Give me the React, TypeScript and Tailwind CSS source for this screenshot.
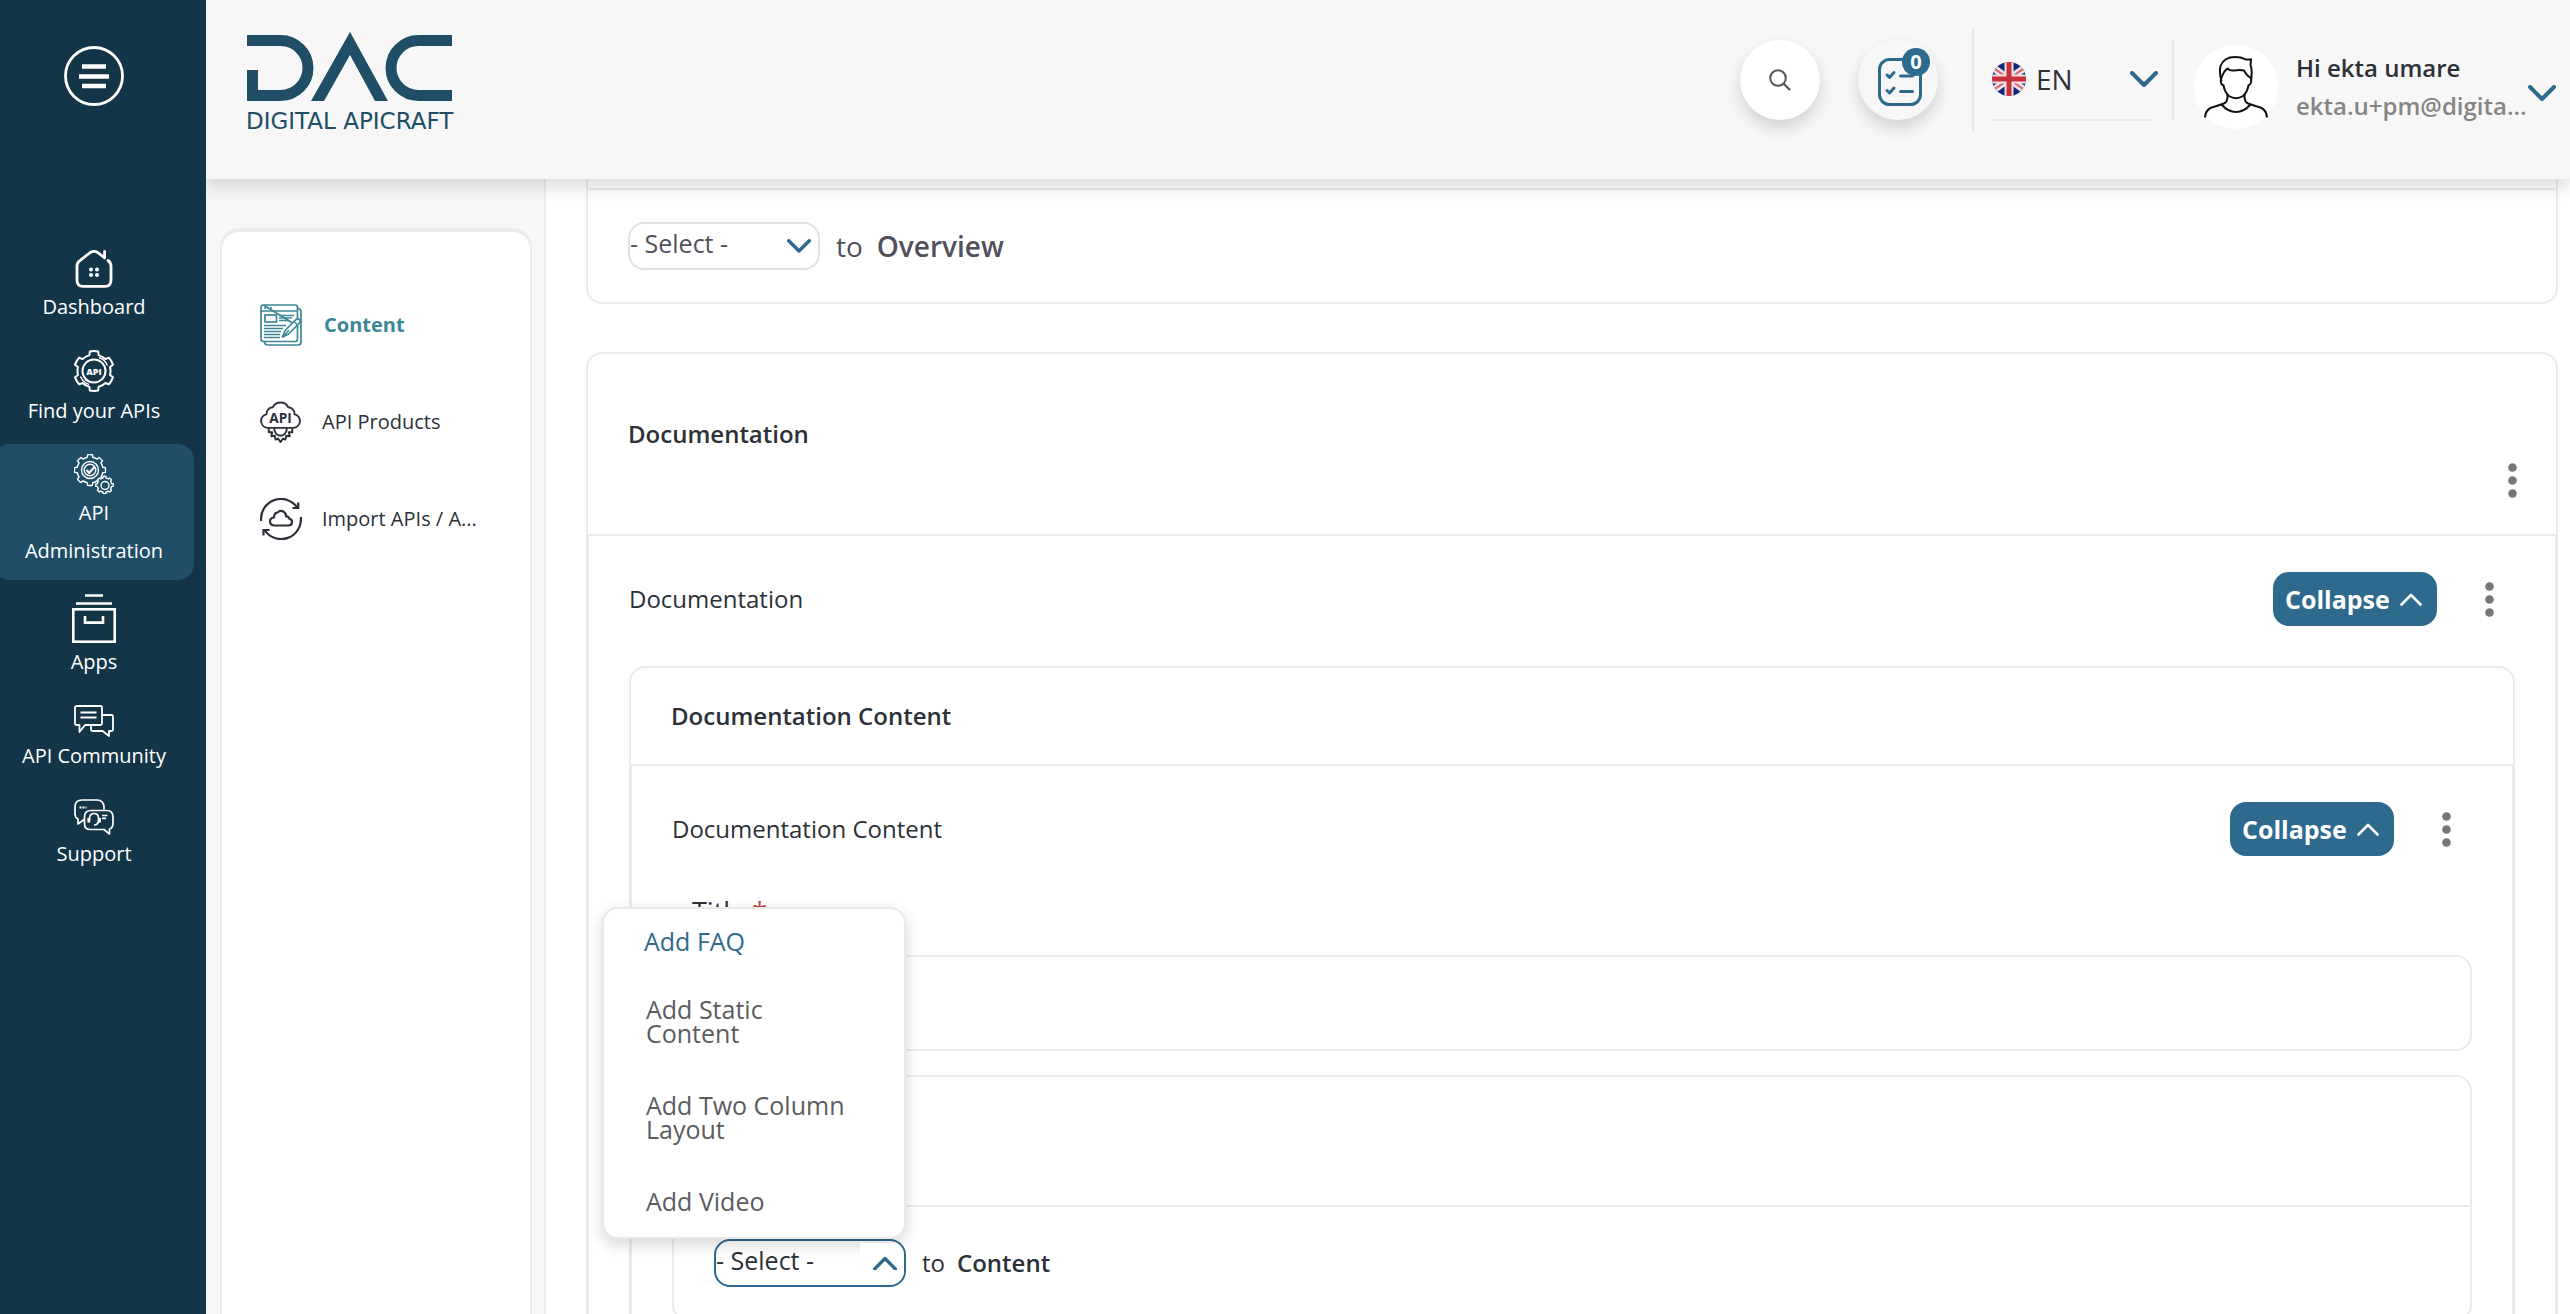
import { ReactNode } from 'react';
import clsx from 'clsx';

function gearPath(cx: number, cy: number, outer: number, inner: number, teeth: number) {
  const step = (Math.PI * 2) / teeth;
  const at = (r: number, t: number) =>
    `${(cx + r * Math.cos(t)).toFixed(2)} ${(cy + r * Math.sin(t)).toFixed(2)}`;
  let d = '';
  for (let i = 0; i < teeth; i++) {
    const a = i * step - Math.PI / 2;
    d += i === 0 ? `M${at(inner, a - step * 0.27)}` : `A${inner} ${inner} 0 0 1 ${at(inner, a - step * 0.27)}`;
    d += `L${at(outer, a - step * 0.2)}A${outer} ${outer} 0 0 1 ${at(outer, a + step * 0.2)}`;
    d += `L${at(inner, a + step * 0.27)}`;
  }
  return `${d}A${inner} ${inner} 0 0 1 ${at(inner, -Math.PI / 2 - step * 0.27)}Z`;
}

function Chevron({ up, className }: { up?: boolean; className?: string }) {
  return (
    <svg viewBox="0 0 28 17" fill="none" stroke="currentColor" strokeWidth="4" className={className} aria-hidden="true">
      <path d={up ? 'M2 15L14 3L26 15' : 'M2 2L14 14L26 2'} strokeLinecap="round" strokeLinejoin="round" />
    </svg>
  );
}

function Logo() {
  return (
    <a href="#" className="block pt-1 text-[#214e67]">
      <svg width="207" height="70" viewBox="246 32 207 70" fill="none" aria-label="DAC">
        <path
          d="M247 40.5H280.5A27.5 27.5 0 0 1 280.5 95.5H252.5V70"
          stroke="currentColor"
          strokeWidth="11"
        />
        <path d="M350 32L388 101H375L350 55L324 101H311Z" fill="currentColor" />
        <path d="M452 40.5H418.5A27.5 27.5 0 0 0 418.5 95.5H452" stroke="currentColor" strokeWidth="11" />
      </svg>
      <span className="mt-2 block whitespace-nowrap font-['DejaVu_Sans',sans-serif] text-[23px] leading-[22px]">
        DIGITAL APICRAFT
      </span>
    </a>
  );
}

function HomeIcon() {
  return (
    <svg width="38" height="38" viewBox="0 0 38 38" fill="none" stroke="currentColor" strokeWidth="2.8">
      <path
        d="M33 10.5q3 2 3 5.500V30q0 6.400-6 6.400H8q-6 0-6-6.400V16q0-3.200 2.600-5.200L14.600 3q4.400-3.200 8.800 0L29.600 7.800V1.500"
        strokeLinecap="round"
        strokeLinejoin="round"
      />
      <g fill="currentColor" stroke="none">
        <circle cx="16" cy="19.500" r="2" />
        <circle cx="22" cy="19.500" r="2" />
        <circle cx="16" cy="25" r="2" />
        <circle cx="22" cy="25" r="2" />
      </g>
    </svg>
  );
}

function FindIcon() {
  return (
    <svg width="42" height="42" viewBox="0 0 42 42" fill="none" stroke="currentColor" strokeWidth="2">
      <path d={gearPath(21, 21, 20, 16.5, 6)} strokeLinejoin="round" />
      <circle cx="21" cy="21" r="11.500" />
      <path d="M26 7.500q6 2 8.500 8M16 34.500q-6-2-8.500-8M12 29.500l6 3" strokeWidth="1.400" />
      <text
        x="21"
        y="24.500"
        textAnchor="middle"
        fill="currentColor"
        stroke="none"
        fontFamily="Open Sans, sans-serif"
        fontWeight="800"
        fontSize="9"
      >
        API
      </text>
    </svg>
  );
}

function AdminIcon() {
  return (
    <svg width="40" height="40" viewBox="0 0 40 40" fill="none" stroke="currentColor" strokeWidth="1.4">
      <path d={gearPath(16, 16, 15.5, 13, 8)} strokeLinejoin="round" />
      <circle cx="16" cy="16" r="8.500" />
      <circle cx="16" cy="16" r="5.800" />
      <path d="M12.500 16l2.700 2.800L20.500 13" strokeWidth="2.200" />
      <path d={gearPath(30.5, 31, 8.7, 7.2, 8)} fill="#214e67" strokeLinejoin="round" />
      <circle cx="31" cy="31.500" r="4" />
    </svg>
  );
}

function AppsIcon() {
  return (
    <svg width="44" height="49" viewBox="0 0 44 49" fill="none" stroke="currentColor" strokeWidth="2.6">
      <path d="M13 1.500H31M4 9.500H40M13 22V28.600H31V22" />
      <rect x="1.300" y="15.300" width="41.400" height="32.400" />
    </svg>
  );
}

function CommunityIcon() {
  return (
    <svg width="40" height="32" viewBox="0 0 40 32" fill="none" stroke="currentColor" strokeWidth="1.800">
      <path d="M3 1H26.500Q28 1 28 2.500V18.500Q28 20 26.500 20H11L5.500 27V20H2.500Q1 20 1 18.500V2.500Q1 1 3 1Z" strokeLinejoin="round" />
      <path d="M6.500 7.500H22.500M6.500 12.500H22.500" />
      <path d="M28 10H37.500Q39 10 39 11.500V24.500Q39 26 37.500 26H35V31L28.500 26H18.500Q17 26 17 24.500V20" strokeLinejoin="round" />
    </svg>
  );
}

function SupportIcon() {
  return (
    <svg width="40" height="36" viewBox="0 0 40 36" fill="none" stroke="currentColor" strokeWidth="1.700" strokeLinejoin="round">
      <path d="M30 10.500V8Q29.500 1 23 1H8Q1 1 1 8V15Q1 18.500 4 20V25L10 20.500" />
      <path d="M17 11.500H32.500Q39 11.500 39 18V24Q39 29 35.500 30V35L30 30.500H16Q10.500 30.500 10.500 25V18Q10.500 11.500 17 11.500Z" />
      <path d="M5.500 8.500H12.500" strokeDasharray="2 1" strokeWidth="2" />
      <path d="M15.500 21V19Q16 14.500 20 14.500Q24.500 14.500 24.500 19V21Q24.500 26 20 26" />
      <path d="M14.800 19V23.500M25.500 19V23.500" strokeWidth="2.800" />
      <path d="M28 16.500H33.500M28 19.300H32" />
    </svg>
  );
}

function ContentIcon() {
  return (
    <svg width="42" height="42" viewBox="0 0 42 42" fill="none" stroke="currentColor" strokeWidth="1.700">
      <path d="M3.500 1H35Q37.500 1 37.500 3.500V15M37.500 22V35Q37.500 37.500 35 37.500H3.500Q1 37.500 1 35V3.500Q1 1 3.500 1Z" />
      <path d="M37.500 4.500Q41 4.500 41 8V38Q41 41 38 41H8Q4.500 41 4.500 37.500" />
      <path d="M1 7H37.500" />
      <path d="M4 4H12" strokeDasharray="2 1" />
      <rect x="5" y="11" width="11.500" height="7" />
      <path d="M19 11.500H34M19 14H32M19 16.500H29M4 21.500H26M4 24.500H23M4 27.500H21M4 30.500H20M4 33.500H20" strokeWidth="1.500" />
      <path d="M22.500 33L25 26.500L36 15.500Q38 14 39.800 15.800Q41 17.500 39.500 19L28.500 30Z" fill="white" strokeLinejoin="round" />
      <path d="M22.500 33L29 26M34 17.500L37.500 21" strokeWidth="1.300" />
    </svg>
  );
}

function ProductsIcon() {
  return (
    <svg width="42" height="42" viewBox="0 0 42 43" fill="none" stroke="currentColor" strokeWidth="2">
      <path
        d="M7.500 27.500A7 7 0 0 1 6 13.700A7 7 0 0 1 12.500 6.500A9 9 0 0 1 28.500 6.500A7 7 0 0 1 35 13.700A7 7 0 0 1 33.500 27.500Z"
        strokeLinejoin="round"
      />
      <path d="M8.500 28V32H12L11 36L14.500 35.500L15.500 39.500L18 38.500L20.500 42L23 38.500L25.500 39.500L26.500 35.500L30 36L29 32H32.500V28" strokeLinejoin="round" />
      <path d="M14 28A6.500 7.500 0 0 0 27 28" />
      <text
        x="20.500"
        y="22.500"
        textAnchor="middle"
        fill="currentColor"
        stroke="none"
        fontFamily="Open Sans, sans-serif"
        fontWeight="700"
        fontSize="14"
      >
        API
      </text>
    </svg>
  );
}

function ImportIcon() {
  return (
    <svg width="42" height="42" viewBox="0 0 42 42" fill="none" stroke="currentColor" strokeWidth="2.200">
      <path d="M1.200 23A19.800 19.800 0 0 1 37.500 10M40.800 19A19.800 19.800 0 0 1 4.500 32" />
      <path d="M38.200 4.500V10H32.500M3.500 37.500V32H9.500" />
      <path d="M14 27.500Q10 27 10 23.500Q10 20 14 19.500Q14 15 17.500 14.500Q20.500 11.500 24 14Q26.500 16 26 18.500Q28.500 18 29 20.500Q32 21 32 24Q32 27.500 28.500 27.500Z" strokeLinejoin="round" />
    </svg>
  );
}

function TaskListIcon() {
  return (
    <svg width="44" height="48" viewBox="0 0 44 48" fill="none" stroke="currentColor" strokeWidth="3">
      <rect x="1.500" y="1.500" width="41" height="45" rx="10" />
      <path d="M9 17L11.500 19.500L16 14.500M9 32.500L11.500 35L16 30M22.500 18H34.500M22.500 33.500H34.500" strokeLinecap="round" strokeLinejoin="round" />
    </svg>
  );
}

function FlagIcon() {
  return (
    <svg width="34" height="34" viewBox="0 0 34 34" className="pointer-events-none absolute left-0" aria-hidden="true">
      <clipPath id="flag-clip">
        <circle cx="17" cy="17" r="17" />
      </clipPath>
      <g clipPath="url(#flag-clip)">
        <rect width="34" height="34" fill="#0b2a7a" />
        <path d="M-4 2L38 32M38 2L-4 32" stroke="#f1e4ea" strokeWidth="7" />
        <path d="M-4 2L38 32M38 2L-4 32" stroke="#d86a78" strokeWidth="2.400" />
        <path d="M17 0V34M0 17H34" stroke="#f3dfe2" strokeWidth="9" />
        <path d="M17 0V34M0 17H34" stroke="#c8313a" strokeWidth="5" />
      </g>
    </svg>
  );
}

function PersonIcon() {
  return (
    <svg width="64" height="62" viewBox="0 0 64 62" fill="none" stroke="#111" strokeWidth="2" strokeLinejoin="round">
      <path d="M17.500 25Q15 16 16.500 10Q20 1 31 1Q37 1 41 3.200Q44 4 47 3.200L46.500 9Q48.500 14 47 25" />
      <path d="M17 23Q20 14 24 12.500Q25 15 30 14.500Q36 13.500 40 14.500Q43 20 47 22" />
      <path d="M17 23Q16 28 19.500 29.500Q21 37 25 40Q32 44.500 39 40Q43 37 44.500 29.500Q48 28 47 22" />
      <path d="M23.500 38.500Q24 46 20 47.500Q13 50 7.500 51.500Q1.500 54 1 61.500" />
      <path d="M40.500 38.500Q40 46 44 47.500Q51 50 56.500 51.500Q62.500 54 63 61.500" />
      <path d="M17.500 48.500Q24 56 32 56Q40 56 46.500 48.500" />
    </svg>
  );
}

interface NavItem {
  lines: string[];
  icon: ReactNode;
  active?: boolean;
}

const navItems: NavItem[] = [
  { lines: ['Dashboard'], icon: <HomeIcon /> },
  { lines: ['Find your APIs'], icon: <FindIcon /> },
  { lines: ['API', 'Administration'], icon: <AdminIcon />, active: true },
  { lines: ['Apps'], icon: <AppsIcon /> },
  { lines: ['API Community'], icon: <CommunityIcon /> },
  { lines: ['Support'], icon: <SupportIcon /> },
];

function Sidebar() {
  return (
    <aside className="relative z-30 w-[206px] shrink-0 bg-[#143548] text-white">
      <div className="-ml-1.5 flex w-[200px] flex-col items-center pt-[46px]">
        <button type="button" aria-label="Toggle menu">
          <svg width="60" height="60" viewBox="0 0 60 60" fill="none" stroke="currentColor">
            <circle cx="30" cy="30" r="28.500" strokeWidth="2.800" />
            <path d="M18 20.500H42M15 30.500H45M18 40H42" strokeWidth="4.500" />
          </svg>
        </button>
        <nav className="mt-[134px] flex w-full flex-col gap-1">
          {navItems.map((item) => (
            <a
              key={item.lines.join(' ')}
              href="#"
              className={clsx('flex flex-col items-center rounded-2xl py-2.5', item.active && 'bg-[#214e67]')}
            >
              {item.icon}
              {item.lines.map((line) => (
                <span key={line} className="text-[20px] leading-[38px]">
                  {line}
                </span>
              ))}
            </a>
          ))}
        </nav>
      </div>
    </aside>
  );
}

function Header() {
  return (
    <header className="relative z-20 h-[179px] shrink-0 bg-[#f7f7f7] shadow-[0_8px_16px_rgba(0,0,0,0.14)]">
      <div className="flex h-40 items-center justify-between pl-10 pr-3.5">
        <Logo />
        <div className="flex items-center">
          <button
            type="button"
            aria-label="Search"
            className="flex size-20 items-center justify-center rounded-full bg-white text-[#555] shadow-[0_8px_16px_rgba(0,0,0,0.15)]"
          >
            <svg width="22" height="22" viewBox="0 0 22 22" fill="none" stroke="currentColor" strokeWidth="2">
              <circle cx="9" cy="9" r="7.800" />
              <path d="M14.500 14.500L21 21" strokeWidth="2.200" />
            </svg>
          </button>
          <button
            type="button"
            aria-label="Tasks"
            className="relative ml-[38px] flex size-20 items-center justify-center rounded-full bg-[#f7f7f7] pl-1 pt-1 text-[#2d6a8e] shadow-[0_8px_16px_rgba(0,0,0,0.15)]"
          >
            <TaskListIcon />
            <span className="absolute right-2 top-2 flex size-7 items-center justify-center rounded-full bg-[#2d6a8e] text-[20px] leading-7 font-bold text-white">
              0
            </span>
          </button>
          <div className="ml-[34px] h-[102px] w-0.5 bg-[#e8e8e8]" />
          <div className="relative ml-[18px] flex h-[82px] w-[162px] items-center border-b-2 border-[#ededed]">
            <FlagIcon />
            <select aria-label="Language" className="w-full appearance-none bg-transparent pl-11 text-[28px] leading-9 text-[#2c3038]">
              <option>EN</option>
            </select>
            <Chevron className="pointer-events-none absolute -right-1 w-7 text-[#2d6a8e]" />
          </div>
          <div className="ml-[18px] h-[82px] w-0.5 bg-[#e8e8e8]" />
          <div className="ml-5 flex items-center pt-3.5">
            <div className="flex size-[84px] items-center justify-center rounded-full bg-white">
              <PersonIcon />
            </div>
            <div className="ml-[18px] w-[232px] whitespace-nowrap text-[24px] leading-[38px] font-semibold">
              <p className="text-[#2c3038]">Hi ekta umare</p>
              <p className="text-[#858585]">ekta.u+pm@digita...</p>
            </div>
            <button type="button" aria-label="Account menu" className="pt-3 text-[#2d6a8e]">
              <Chevron className="w-7" />
            </button>
          </div>
        </div>
      </div>
    </header>
  );
}

const panelItems = [
  { label: 'Content', icon: <ContentIcon />, active: true },
  { label: 'API Products', icon: <ProductsIcon /> },
  { label: 'Import APIs / A...', icon: <ImportIcon /> },
];

function SidePanel() {
  return (
    <div className="flex w-[340px] shrink-0 border-r-2 border-[#ebebeb] bg-[#f7f7f7] pl-3.5 pr-3 pt-[49px]">
      <nav className="flex flex-1 flex-col gap-[55px] rounded-t-[20px] border-x-2 border-t-4 border-[#ebebeb] bg-white pl-[38px] pt-[72px]">
        {panelItems.map((item) => (
          <a
            key={item.label}
            href="#"
            className={clsx(
              'flex items-center text-[20px] leading-8',
              item.active ? 'gap-[22px] font-bold text-[#3c8696]' : 'gap-5 text-[#2c3038]'
            )}
          >
            {item.icon}
            <span className="whitespace-nowrap">{item.label}</span>
          </a>
        ))}
      </nav>
    </div>
  );
}

function Kebab() {
  return (
    <button type="button" aria-label="More actions" className="flex h-9 w-9 items-center justify-center text-[#777]">
      <svg width="9" height="35" viewBox="0 0 9 35" fill="currentColor">
        <circle cx="4.500" cy="4.500" r="4.300" />
        <circle cx="4.500" cy="17.500" r="4.300" />
        <circle cx="4.500" cy="30.500" r="4.300" />
      </svg>
    </button>
  );
}

function ItemRow({ title }: { title: string }) {
  return (
    <div className="flex items-center justify-between pr-2">
      <span>{title}</span>
      <div className="flex items-center gap-[34px]">
        <button
          type="button"
          className="flex h-[54px] w-[164px] items-center gap-2.5 rounded-2xl bg-[#2d6a8e] pl-3 text-[25px] leading-9 font-bold text-white"
        >
          Collapse
          <svg width="22" height="13" viewBox="0 0 22 13" fill="none" stroke="currentColor" strokeWidth="2.600" aria-hidden="true">
            <path d="M1.500 11.500L11 2L20.500 11.500" strokeLinecap="round" strokeLinejoin="round" />
          </svg>
        </button>
        <Kebab />
      </div>
    </div>
  );
}

const menuItems = ['Add FAQ', 'Add Static Content', 'Add Two Column Layout', 'Add Video'];

function AddMenu() {
  return (
    <ul className="absolute bottom-full -left-28 z-10 w-[304px] rounded-2xl border-2 border-[#e9e9e9] bg-white shadow-[0_6px_16px_rgba(0,0,0,0.16)]">
      {menuItems.map((item, i) => (
        <li key={item}>
          <button
            type="button"
            className={clsx(
              'block w-full pr-12 text-left text-[25px] leading-6',
              i === 0 ? 'py-5 pl-10 text-[#2d6a8e]' : 'py-6 pl-[42px] text-[#5b5b60]'
            )}
          >
            {item}
          </button>
        </li>
      ))}
    </ul>
  );
}

function AddSelect({ label, open }: { label: string; open?: boolean }) {
  return (
    <div className="relative h-12 w-48">
      <select
        aria-label={label}
        className={clsx(
          'h-12 w-full appearance-none rounded-2xl border-2 bg-white pb-1.5 text-[25px] leading-9',
          open ? 'border-[#2d6a8e]' : 'border-[#e2e2e2]'
        )}
      >
        <option>- Select -</option>
      </select>
      <span className="pointer-events-none absolute inset-y-1 right-0.5 z-20 flex w-11 items-center justify-end rounded-r-xl bg-white pr-[7px] text-[#2d6a8e]">
        <Chevron up={open} className="w-6" />
      </span>
      {open && <AddMenu />}
    </div>
  );
}

export default function App() {
  return (
    <div className="flex h-screen overflow-hidden bg-white font-['Open_Sans',sans-serif] text-[24px] leading-8 text-[#2c3038]">
      <Sidebar />
      <div className="flex min-w-0 flex-1 flex-col">
        <Header />
        <div className="flex min-h-0 flex-1">
          <SidePanel />
          <main className="min-w-0 flex-1 overflow-hidden pl-10 pr-3">
            <section className="rounded-b-2xl border-x-2 border-b-2 border-[#ebebeb] pt-[9px]">
              <div className="flex items-center border-t-2 border-[#ebebeb] px-10 py-8 text-[28px] text-[#52505c]">
                <AddSelect label="Add to Overview" />
                <span className="ml-4">to</span>
                <strong className="ml-3.5 font-semibold">Overview</strong>
              </div>
            </section>

            <section className="mt-12 rounded-2xl border-2 border-[#ebebeb]">
              <div className="pb-9 pl-10 pr-[26px] pt-16">
                <h2 className="font-semibold">Documentation</h2>
                <div className="mt-3 flex justify-end">
                  <Kebab />
                </div>
              </div>
              <div className="border-x border-t-2 border-[#ebebeb] px-10 pb-10 pt-9">
                <ItemRow title="Documentation" />
                <section className="mt-10 rounded-2xl border-2 border-[#ebebeb]">
                  <h3 className="px-10 py-8 font-semibold">Documentation Content</h3>
                  <div className="border-x border-t-2 border-[#ebebeb] px-10 pb-10 pt-9">
                    <ItemRow title="Documentation Content" />
                    <label htmlFor="title" className="mb-[27px] mt-10 block pl-5 text-[27px] leading-8">
                      Title <span className="text-[#c8403f]">*</span>
                    </label>
                    <input id="title" type="text" className="block h-24 w-full rounded-2xl border-2 border-[#ebebeb] px-5" />
                    <section className="mt-6 rounded-2xl border-2 border-[#ebebeb]">
                      <div className="h-32" />
                      <div className="flex items-center border-t-2 border-[#ebebeb] px-10 py-8">
                        <AddSelect label="Add to Content" open />
                        <span className="ml-4">to</span>
                        <strong className="ml-3 font-semibold">Content</strong>
                      </div>
                    </section>
                  </div>
                </section>
              </div>
            </section>
          </main>
        </div>
      </div>
    </div>
  );
}
